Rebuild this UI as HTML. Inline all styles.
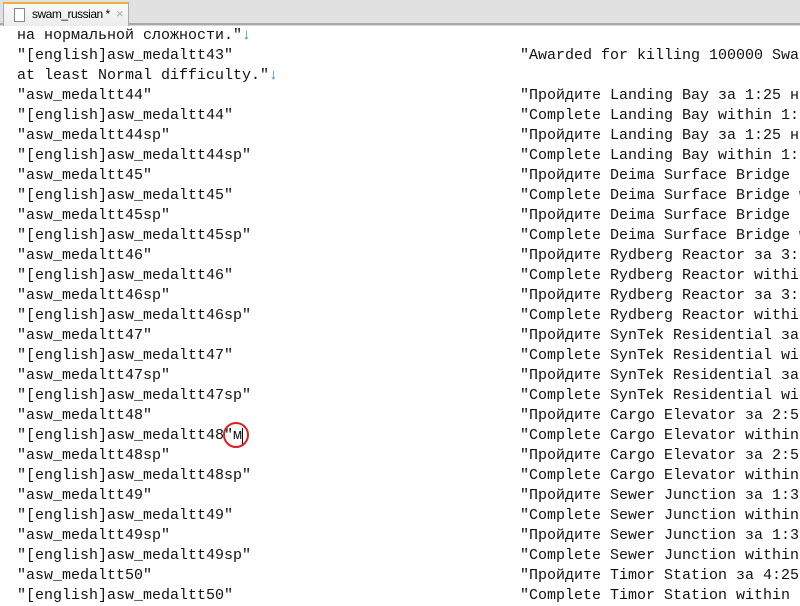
<!DOCTYPE html>
<html><head><meta charset="utf-8"><style>
body{margin:0;width:800px;height:600px;overflow:hidden;background:#fff;position:relative;font-family:"Liberation Mono","Courier New",monospace}
.bar{position:absolute;left:0;top:0;width:800px;height:23px;background:#e1e1e1}
.line{position:absolute;left:0;top:23px;width:800px;height:2px;background:#a8a8a8}
.line2{position:absolute;left:0;top:25px;width:800px;height:1px;background:#d8d8d8}
.tab{position:absolute;left:3px;top:2px;width:126px;height:24px;background:linear-gradient(#fafafa,#ececec);border:1px solid #a8a8a8;border-bottom:none;border-top:2px solid #f0b040;box-sizing:border-box;font:12px "Liberation Sans",sans-serif;color:#000;letter-spacing:-0.5px}
.tab span{position:absolute;left:28px;top:3px}
.doc{position:absolute;left:10px;top:4px;width:11px;height:14px;border:1px solid #888;background:#fff;box-sizing:border-box}
.x{position:absolute;left:112px;top:2px;color:#aaa;font-size:13px}
.txt{position:absolute;left:17px;top:26px;font-size:15px;line-height:20px;white-space:pre;color:#111}
.c2{position:absolute;left:503px}
.ar{color:#3a7fd8}
.circ{position:absolute;left:223px;top:422px;width:26px;height:26px;border:2px solid #e02020;border-radius:50%;box-sizing:border-box}
.cur{position:absolute;left:242px;top:428px;width:1px;height:16px;background:#000}
</style></head><body>
<div class="bar"></div><div class="line"></div><div class="line2"></div>
<div class="tab"><div class="doc"></div><span>swam_russian *</span><div class="x">×</div></div>
<div class="txt">на нормальной сложности."<span class="ar">↓</span>
"[english]asw_medaltt43"<span class="c2">"Awarded for killing 100000 Swa</span>
at least Normal difficulty."<span class="ar">↓</span>
"asw_medaltt44"<span class="c2">"Пройдите Landing Bay за 1:25 н</span>
"[english]asw_medaltt44"<span class="c2">"Complete Landing Bay within 1:</span>
"asw_medaltt44sp"<span class="c2">"Пройдите Landing Bay за 1:25 н</span>
"[english]asw_medaltt44sp"<span class="c2">"Complete Landing Bay within 1:</span>
"asw_medaltt45"<span class="c2">"Пройдите Deima Surface Bridge </span>
"[english]asw_medaltt45"<span class="c2">"Complete Deima Surface Bridge w</span>
"asw_medaltt45sp"<span class="c2">"Пройдите Deima Surface Bridge </span>
"[english]asw_medaltt45sp"<span class="c2">"Complete Deima Surface Bridge w</span>
"asw_medaltt46"<span class="c2">"Пройдите Rydberg Reactor за 3:</span>
"[english]asw_medaltt46"<span class="c2">"Complete Rydberg Reactor withi</span>
"asw_medaltt46sp"<span class="c2">"Пройдите Rydberg Reactor за 3:</span>
"[english]asw_medaltt46sp"<span class="c2">"Complete Rydberg Reactor withi</span>
"asw_medaltt47"<span class="c2">"Пройдите SynTek Residential за</span>
"[english]asw_medaltt47"<span class="c2">"Complete SynTek Residential wi</span>
"asw_medaltt47sp"<span class="c2">"Пройдите SynTek Residential за</span>
"[english]asw_medaltt47sp"<span class="c2">"Complete SynTek Residential wi</span>
"asw_medaltt48"<span class="c2">"Пройдите Cargo Elevator за 2:5</span>
"[english]asw_medaltt48"м<span class="c2">"Complete Cargo Elevator within</span>
"asw_medaltt48sp"<span class="c2">"Пройдите Cargo Elevator за 2:5</span>
"[english]asw_medaltt48sp"<span class="c2">"Complete Cargo Elevator within</span>
"asw_medaltt49"<span class="c2">"Пройдите Sewer Junction за 1:3</span>
"[english]asw_medaltt49"<span class="c2">"Complete Sewer Junction within</span>
"asw_medaltt49sp"<span class="c2">"Пройдите Sewer Junction за 1:3</span>
"[english]asw_medaltt49sp"<span class="c2">"Complete Sewer Junction within</span>
"asw_medaltt50"<span class="c2">"Пройдите Timor Station за 4:25</span>
"[english]asw_medaltt50"<span class="c2">"Complete Timor Station within </span></div>
<div class="cur"></div><div class="circ"></div>
</body></html>
